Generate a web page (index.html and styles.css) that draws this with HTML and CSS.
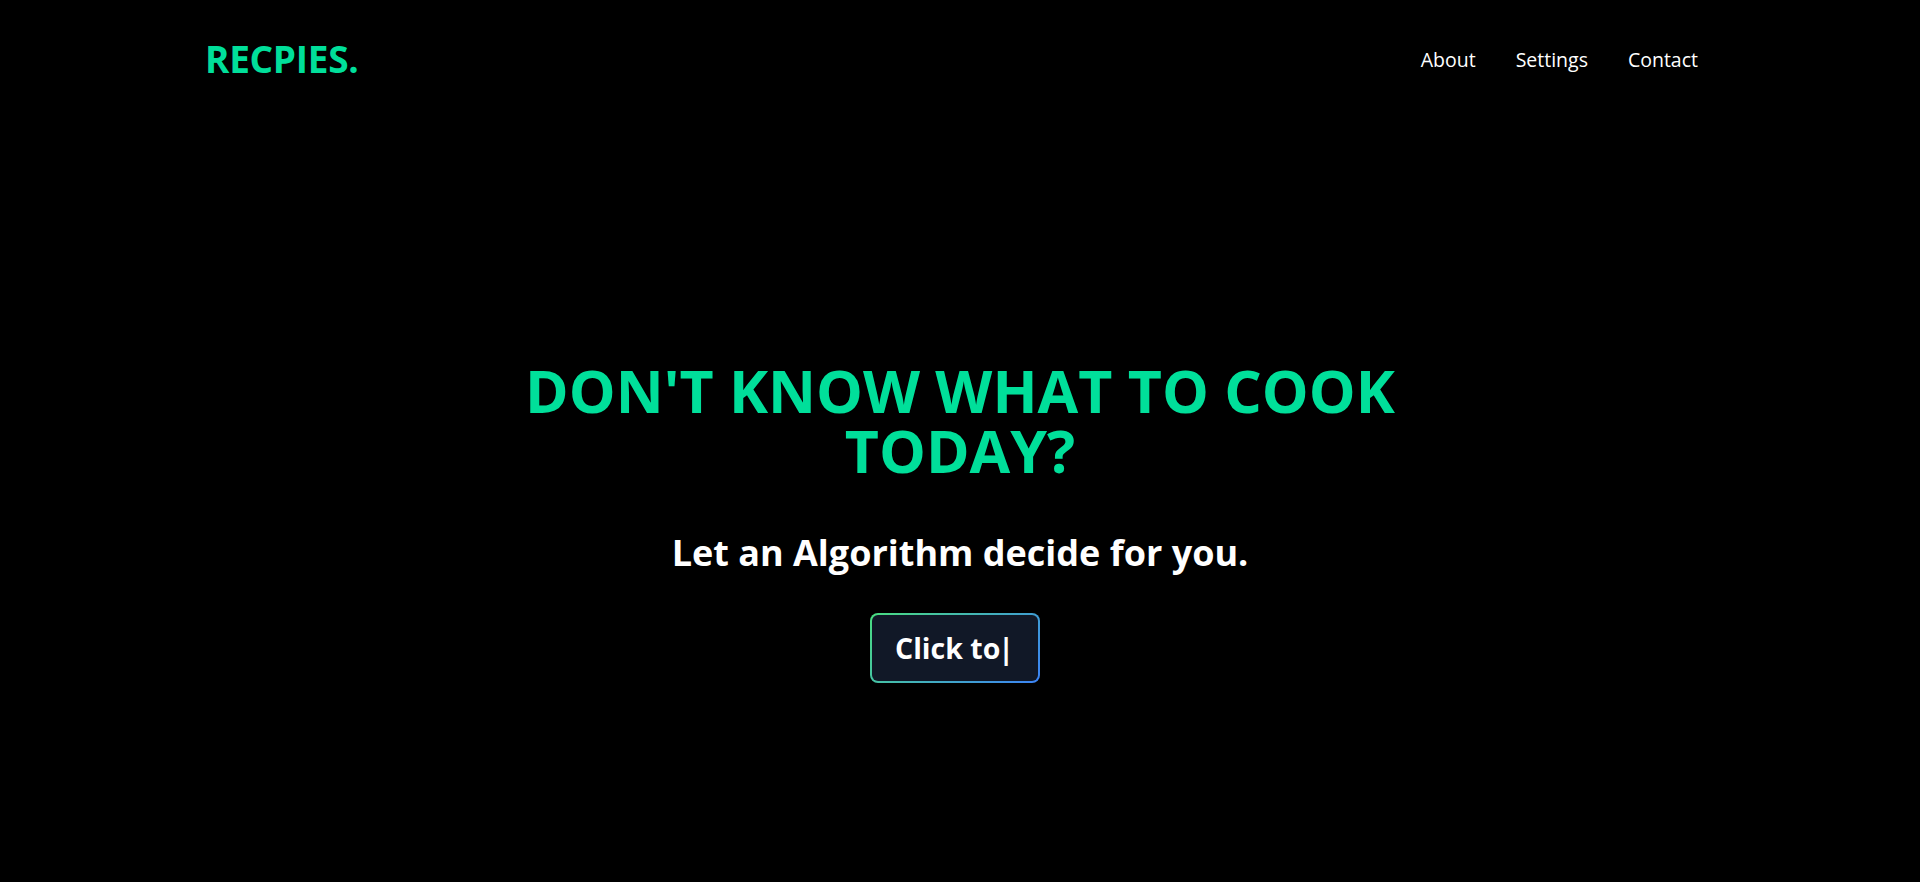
FILE: index.html
```html
<!DOCTYPE html>
<html lang="en">
<head>
<meta charset="utf-8">
<title>Recpies</title>
<link rel="stylesheet" href="styles.css">
</head>
<body>
<header class="topbar">
  <h1 class="logo">RECPIES.</h1>
  <nav class="nav">
    <a class="nav-link" href="#">About</a>
    <a class="nav-link" href="#">Settings</a>
    <a class="nav-link" href="#">Contact</a>
  </nav>
</header>
<main class="hero">
  <h2 class="hero-title">DON'T KNOW WHAT TO COOK<br>TODAY?</h2>
  <p class="hero-sub">Let an Algorithm decide for you.</p>
  <button class="cta" type="button"><span class="cta-inner">Click to<span class="caret">|</span></span></button>
</main>
</body>
</html>
```

FILE: styles.css
```css
* { box-sizing: border-box; }
html, body {
  margin: 0;
  padding: 0;
  background: #000;
  color: #fff;
  font-family: "Open Sans", "Noto Sans", sans-serif;
  height: 100%;
}
.topbar {
  max-width: 1536px;
  margin: 0 auto;
  padding: 0 10px 0 13px;
  height: 118px;
  display: flex;
  align-items: center;
  justify-content: space-between;
}
.logo {
  margin: 0;
  font-size: 37px;
  font-weight: 700;
  color: #00df9a;
  line-height: 40px;
  letter-spacing: -0.3px;
}
.nav {
  display: flex;
}
.nav-link {
  color: #fff;
  text-decoration: none;
  font-size: 19.5px;
  padding: 16px 20px;
}
.hero {
  text-align: center;
  padding-top: 242px;
}
.hero-title {
  margin: 0;
  font-size: 59px;
  line-height: 60px;
  font-weight: 700;
  color: #00df9a;
}
.hero-sub {
  margin: 53px 0 0;
  font-size: 36px;
  font-weight: 700;
  line-height: 40px;
}
.cta {
  margin-top: 40px;
  margin-right: 10px;
  padding: 2px;
  border: 0;
  border-radius: 8px;
  background: linear-gradient(135deg, #4ade80, #3b82f6);
  cursor: pointer;
  font-family: inherit;
}
.cta-inner {
  display: block;
  background: #111827;
  border-radius: 6px;
  color: #fff;
  font-family: "Open Sans", "Noto Sans", sans-serif;
  font-size: 28.5px;
  font-weight: 700;
  line-height: 40px;
  padding: 13px 24px 13px 23px;
}
.caret {
  margin-left: -2px;
}
```
